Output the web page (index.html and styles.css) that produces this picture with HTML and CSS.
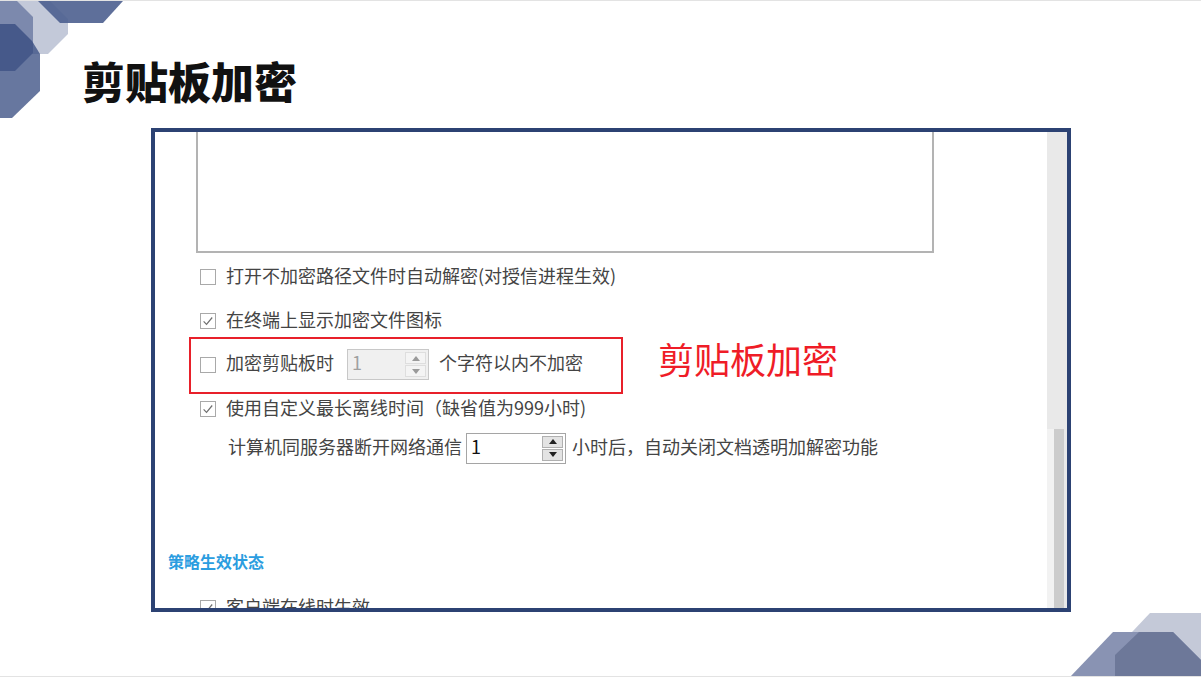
FILE: index.html
```html
<!DOCTYPE html>
<html lang="zh-CN">
<head>
    <meta charset="UTF-8">
    <title>剪贴板加密</title>
    <link rel="stylesheet" href="styles.css">
</head>
<body>

    <svg class="deco deco-tl" width="130" height="120" viewBox="0 0 130 120">
        <polygon points="15,0 50,0 68,18 68,33 48,53 32,53 32,17" fill="#c3c9d9"/>
        <polygon points="0,0 17,0 33,16 33,52 15,70 0,70" fill="#7c89ad"/>
        <polygon points="0,23 15,23 32,40 40,53 40,90 12,117 0,117" fill="#34497f" fill-opacity="0.75"/>
        <polygon points="38,0 123,0 103,22 60,22" fill="#4d5f8f" fill-opacity="0.9"/>
    </svg>

    <svg class="deco deco-br" width="141" height="77" viewBox="1060 600 141 77">
        <polygon points="1150,613 1201,613 1201,677 1115,677 1115,650" fill="#c4c9d8"/>
        <polygon points="1113,632 1173,632 1201,660 1201,677 1070,677" fill="#8993b3"/>
        <polygon points="1139,632 1173,632 1201,660 1201,677 1115,677 1115,655" fill="#6d7899"/>
    </svg>

    <h1 class="title">剪贴板加密</h1>

    <div class="shot">
        <div class="pane">
            <div class="textbox"></div>

            <div class="row row-1">
                <span class="cb"></span>
                <span class="txt">打开不加密路径文件时自动解密(对授信进程生效)</span>
            </div>

            <div class="row row-2">
                <span class="cb checked"><svg viewBox="0 0 16 16"><path d="M3 8.5 L6.3 11.8 L12.8 4" /></svg></span>
                <span class="txt">在终端上显示加密文件图标</span>
            </div>

            <div class="mark-line">
                <div class="redbox">
                    <span class="cb"></span>
                    <span class="txt">加密剪贴板时</span>
                    <span class="spin disabled">
                        <span class="spin-val">1</span>
                        <span class="spin-btns">
                            <span class="sb"><svg viewBox="0 0 8 5"><path d="M0 5 L4 0 L8 5 Z"/></svg></span>
                            <span class="sb"><svg viewBox="0 0 8 5"><path d="M0 0 L8 0 L4 5 Z"/></svg></span>
                        </span>
                    </span>
                    <span class="txt after-spin">个字符以内不加密</span>
                </div>
                <span class="red-label">剪贴板加密</span>
            </div>

            <div class="row row-4">
                <span class="cb checked"><svg viewBox="0 0 16 16"><path d="M3 8.5 L6.3 11.8 L12.8 4" /></svg></span>
                <span class="txt">使用自定义最长离线时间（缺省值为999小时)</span>
            </div>

            <div class="row row-5">
                <span class="txt">计算机同服务器断开网络通信</span>
                <span class="spin">
                    <span class="spin-val">1</span>
                    <span class="spin-btns">
                        <span class="sb"><svg viewBox="0 0 8 5"><path d="M0 5 L4 0 L8 5 Z"/></svg></span>
                        <span class="sb"><svg viewBox="0 0 8 5"><path d="M0 0 L8 0 L4 5 Z"/></svg></span>
                    </span>
                </span>
                <span class="txt after-spin2">小时后，自动关闭文档透明加解密功能</span>
            </div>

            <div class="section">策略生效状态</div>

            <div class="row row-6">
                <span class="cb checked"><svg viewBox="0 0 16 16"><path d="M3 8.5 L6.3 11.8 L12.8 4" /></svg></span>
                <span class="txt">客户端在线时生效</span>
            </div>
        </div>
        <div class="scrollbar">
            <div class="track"></div>
            <div class="thumb-area"><div class="thumb-gap"></div><div class="thumb"></div></div>
        </div>
    </div>

</body>
</html>
```

FILE: styles.css
```css
body {
    margin: 0;
    width: 1201px;
    height: 677px;
    position: relative;
    overflow: hidden;
    background: #ffffff;
    font-family: "Noto Sans CJK SC", "Noto Sans", sans-serif;
    border-top: 1px solid #e3e3e3;
    box-sizing: border-box;
}
body::after {
    content: "";
    position: absolute;
    left: 0;
    right: 0;
    bottom: 0;
    height: 1px;
    background: #e3e3e3;
}
.deco {
    position: absolute;
    display: block;
}
.deco-tl {
    left: 0;
    top: 0;
}
.deco-br {
    right: 0;
    bottom: 0;
}
.title {
    margin: 0;
    padding: 56px 0 0 82px;
    font-size: 43px;
    line-height: 47px;
    font-weight: 900;
    color: #111111;
    position: relative;
}
.shot {
    margin: 24px 0 0 151px;
    width: 920px;
    height: 484px;
    box-sizing: border-box;
    border: 4px solid #2c4273;
    display: flex;
    background: #ffffff;
    overflow: hidden;
}
.pane {
    flex: 1;
    overflow: hidden;
    color: #444444;
    font-size: 18px;
}
.textbox {
    margin-left: 41px;
    width: 734px;
    height: 119px;
    border: 2px solid #b3b3b3;
    border-top: none;
}
.row {
    display: flex;
    align-items: center;
    height: 32px;
    padding-left: 45px;
    white-space: nowrap;
}
.txt {
    padding-bottom: 5px;
}
.row-1 {
    margin-top: 8px;
}
.row-2 {
    margin-top: 12px;
}
.row-4 {
    height: 30px;
}
.row-5 {
    margin-top: 8px;
    padding-left: 73px;
}
.row-6 {
    margin-top: 19px;
}
.cb {
    width: 16px;
    height: 16px;
    box-sizing: border-box;
    border: 1px solid #a9a9a9;
    background: #ffffff;
    margin-right: 10px;
    flex-shrink: 0;
    display: flex;
}
.cb svg {
    width: 14px;
    height: 14px;
    fill: none;
    stroke: #6f6f6f;
    stroke-width: 1.4;
}
.mark-line {
    display: flex;
    align-items: center;
    margin-left: 34px;
    white-space: nowrap;
}
.redbox {
    width: 434px;
    height: 57px;
    box-sizing: border-box;
    border: 2px solid #e8202a;
    display: flex;
    align-items: center;
    padding-left: 9px;
    padding-bottom: 2px;
}
.spin {
    margin-left: 13px;
    width: 82px;
    height: 31px;
    box-sizing: border-box;
    border: 1px solid #a5a5a5;
    background: #ffffff;
    display: flex;
    align-items: stretch;
    color: #111111;
}
.spin.disabled {
    background: #f0f0f0;
    border-color: #c8c8c8;
    color: #a0a0a0;
}
.spin-val {
    flex: 1;
    padding-left: 4px;
    line-height: 25px;
    font-size: 18px;
}
.spin-btns {
    width: 21px;
    display: flex;
    flex-direction: column;
    padding: 2px 2px 2px 0;
    gap: 1px;
}
.sb {
    flex: 1;
    display: flex;
    align-items: center;
    justify-content: center;
    background: #e3e3e3;
    border: 1px solid #b0b0b0;
}
.sb svg {
    width: 8px;
    height: 5px;
    fill: #222222;
}
.spin.disabled .sb {
    background: #f4f4f4;
    border-color: #dedede;
}
.spin.disabled .sb svg {
    fill: #9a9a9a;
}
.after-spin {
    margin-left: 10px;
}
.row-5 .spin {
    margin-left: 4px;
    width: 100px;
}
.after-spin2 {
    margin-left: 6px;
}
.red-label {
    margin-left: 35px;
    font-size: 36px;
    color: #ef1c27;
    margin-top: -16px;
}
.section {
    margin-top: 85px;
    padding-left: 13px;
    font-size: 16px;
    line-height: 24px;
    font-weight: 700;
    color: #2b9de0;
}
.scrollbar {
    width: 20px;
    display: flex;
    flex-direction: column;
}
.track {
    height: 297px;
    background: #e9e9e9;
}
.thumb-area {
    flex: 1;
    display: flex;
    background: #e9e9e9;
}
.thumb-gap {
    width: 7px;
    background: #f2f2f2;
}
.thumb {
    width: 10px;
    background: #cccccc;
}
```
